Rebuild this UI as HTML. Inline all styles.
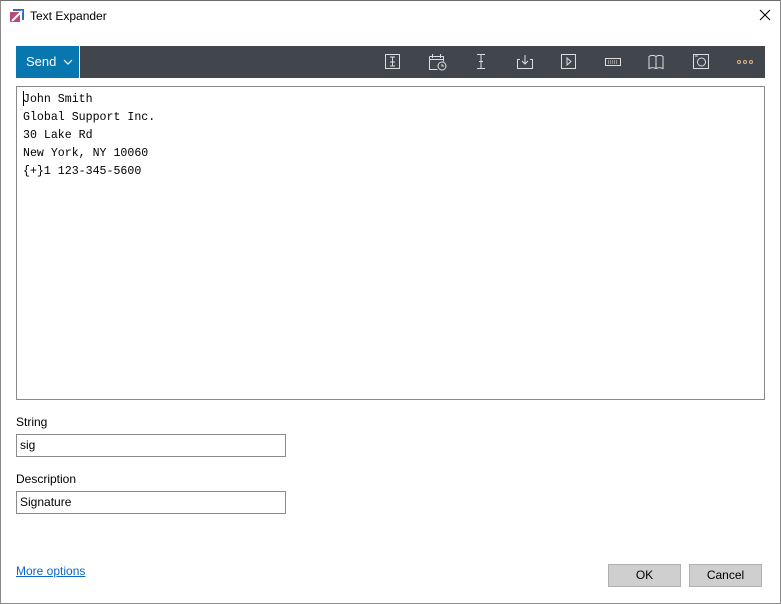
<!DOCTYPE html>
<html><head><meta charset="utf-8"><style>
*{margin:0;padding:0;box-sizing:border-box}
body{width:781px;height:604px;background:#fff;position:relative;overflow:hidden;font-family:"Liberation Sans",sans-serif;font-size:12px;color:#000}
.frame{position:absolute;left:0;top:0;width:781px;height:604px;border:1px solid #8a8a8a;border-top:1px solid #6d6d6d}
.abs{position:absolute}
.tb{left:16px;top:46px;width:749px;height:32px;background:#40464c}
.send{left:16px;top:46px;width:63px;height:32px;background:#0877b0;color:#fff;font-size:13px;line-height:32px;padding-left:10px}
.ta{left:16px;top:86px;width:749px;height:314px;border:1px solid #8a8a8a;font-family:"Liberation Mono",monospace;font-size:11.6px;line-height:18px;padding:4px 0 0 6px;white-space:pre}
.lbl{font-size:12px}
.inp{width:270px;height:23px;border:1px solid #8a8a8a;font-size:12px;line-height:21px;padding-left:3px}
.btn{top:564px;width:73px;height:23px;background:#cfcfcf;border:1px solid #b0b0b0;text-align:center;line-height:21px;font-size:12px}
svg.i{position:absolute;top:52px}
</style></head><body>
<div class="frame"></div>
<svg class="abs" style="left:9px;top:8px" width="16" height="16" viewBox="0 0 16 16"><rect x="1" y="4" width="10" height="10" fill="#b84a7a"/><path d="M4 2h10v10" fill="none" stroke="#2f6fbf" stroke-width="2"/><path d="M3 13L13 3" stroke="#fff" stroke-width="2"/></svg>
<div class="abs" style="left:30px;top:9px;font-size:12px">Text Expander</div>
<svg class="abs" style="left:759px;top:9px" width="12" height="12" viewBox="0 0 12 12"><path d="M1 1L11 11M11 1L1 11" stroke="#000" stroke-width="1.1"/></svg>
<div class="abs tb"></div>
<div class="abs send">Send <svg width="10" height="8" viewBox="0 0 10 8" style="margin-left:3px"><path d="M1 2l4 4 4-4" fill="none" stroke="#fff" stroke-width="1.2"/></svg></div>
<div class="abs" style="left:79px;top:46px;width:1px;height:32px;background:#fff"></div>
<svg class="i" style="left:384px" width="18" height="20" viewBox="0 0 18 20" fill="none" stroke="#ddd"><rect x="1.5" y="2.5" width="14" height="14"/><path d="M6 5h5M8.5 5v9M6 14h5M6 10h5"/></svg>
<svg class="i" style="left:428px" width="20" height="20" viewBox="0 0 20 20" fill="none" stroke="#ddd"><path d="M1.5 4.5h14v5M1.5 4.5v13h8M1.5 7.5h14M4.5 2v4M12.5 2v4"/><circle cx="14" cy="14" r="4"/><path d="M14 12v2h2"/></svg>
<svg class="i" style="left:475px" width="12" height="20" viewBox="0 0 12 20" fill="none" stroke="#ddd"><path d="M2 2.5h8M6 2.5v14M2 16.5h8M4 9.5h4"/></svg>
<svg class="i" style="left:516px" width="18" height="20" viewBox="0 0 18 20" fill="none" stroke="#ddd"><path d="M4 7.5H1.5v9h15v-9H14M9 3v9M6 9l3 3 3-3"/></svg>
<svg class="i" style="left:560px" width="18" height="20" viewBox="0 0 18 20" fill="none" stroke="#ddd"><rect x="1.5" y="2.5" width="14" height="14"/><path d="M7 6v7l4-3.5z"/></svg>
<svg class="i" style="left:604px" width="18" height="20" viewBox="0 0 18 20" fill="none" stroke="#ddd"><rect x="1.5" y="6.5" width="15" height="7"/><path d="M4 9h10M4 11h10" stroke-dasharray="1 1"/></svg>
<svg class="i" style="left:647px" width="18" height="20" viewBox="0 0 18 20" fill="none" stroke="#ddd"><path d="M9 4.5v12M9 4.5c-2-1.5-5-1.5-7 0v12c2-1 5-1 7 0c2-1 5-1 7 0v-12c-2-1.5-5-1.5-7 0"/></svg>
<svg class="i" style="left:692px" width="18" height="20" viewBox="0 0 18 20" fill="none" stroke="#ddd"><rect x="1.5" y="2.5" width="15" height="14"/><circle cx="9.5" cy="10" r="4"/><path d="M3 4h3"/></svg>
<svg class="i" style="left:736px" width="18" height="20" viewBox="0 0 18 20" fill="none" stroke="#e8b080"><circle cx="3" cy="10" r="1.5"/><circle cx="9" cy="10" r="1.5"/><circle cx="15" cy="10" r="1.5"/></svg>
<div class="abs ta">John Smith
Global Support Inc.
30 Lake Rd
New York, NY 10060
{+}1 123-345-5600</div>
<div class="abs" style="left:23px;top:91px;width:1px;height:15px;background:#000"></div>
<div class="abs lbl" style="left:16px;top:415px">String</div>
<div class="abs inp" style="left:16px;top:434px">sig</div>
<div class="abs lbl" style="left:16px;top:472px">Description</div>
<div class="abs inp" style="left:16px;top:491px">Signature</div>
<div class="abs" style="left:16px;top:564px;color:#0a66c8;text-decoration:underline">More options</div>
<div class="abs btn" style="left:608px">OK</div>
<div class="abs btn" style="left:689px">Cancel</div>
</body></html>
